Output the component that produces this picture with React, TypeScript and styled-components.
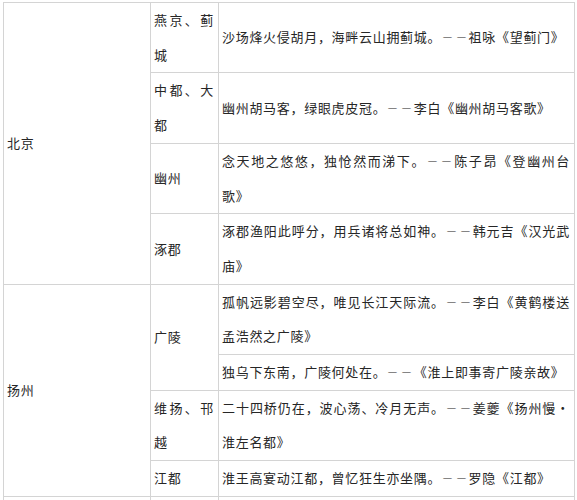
import React from "react";
import styled, { createGlobalStyle } from "styled-components";

const GlobalStyle = createGlobalStyle`
  html, body {
    margin: 0;
    padding: 0;
    background: #fff;
    overflow: hidden;
  }
  body {
    font-family: "Noto Sans CJK SC", "Noto Sans", sans-serif;
  }
`;

const Page = styled.div`
  width: 577px;
  height: 500px;
  overflow: hidden;
  padding: 2px 0 0 3px;
  box-sizing: border-box;
`;

const Table = styled.table`
  border-collapse: collapse;
  table-layout: fixed;
  width: 571px;
  color: #262626;
  font-size: 13px;
  letter-spacing: 0.7px;
  line-height: 34.7px;
  font-variant-east-asian: full-width;
  text-spacing-trim: space-all;
`;

type Kind = "city" | "area" | "poem";

const widths: Record<Kind, number> = {
  city: 147,
  area: 68,
  poem: 356,
};

const Col = styled.col<{ $kind: Kind }>`
  width: ${(p) => widths[p.$kind]}px;
`;

const Cell = styled.td<{ $kind: Kind }>`
  border: 1px solid #d4d4d4;
  padding: 0 4px 0 3px;
  vertical-align: middle;
  text-align: ${(p) => (p.$kind === "city" ? "left" : "justify")};
  line-break: strict;
`;

// the source font draws each dash of "——" as a short stroke with gaps
const Dash = styled.span`
  display: inline-block;
  width: 13px;
  margin-right: 0.7px;
  letter-spacing: 0;
  line-height: 1;
  text-align: center;
  transform: scaleX(0.76);
`;

type Area = { name: string; poems: string[] };
type City = { name: string; areas: Area[] };

const data: City[] = [
  {
    name: "北京",
    areas: [
      { name: "燕京、蓟城", poems: ["沙场烽火侵胡月，海畔云山拥蓟城。——祖咏《望蓟门》"] },
      { name: "中都、大都", poems: ["幽州胡马客，绿眼虎皮冠。——李白《幽州胡马客歌》"] },
      { name: "幽州", poems: ["念天地之悠悠，独怆然而涕下。——陈子昂《登幽州台歌》"] },
      { name: "涿郡", poems: ["涿郡渔阳此呼分，用兵诸将总如神。——韩元吉《汉光武庙》"] },
    ],
  },
  {
    name: "扬州",
    areas: [
      {
        name: "广陵",
        poems: [
          "孤帆远影碧空尽，唯见长江天际流。——李白《黄鹤楼送孟浩然之广陵》",
          "独乌下东南，广陵何处在。——《淮上即事寄广陵亲故》",
        ],
      },
      { name: "维扬、邗越", poems: ["二十四桥仍在，波心荡、冷月无声。——姜夔《扬州慢·淮左名都》"] },
      { name: "江都", poems: ["淮王高宴动江都，曾忆狂生亦坐隅。——罗隐《江都》"] },
    ],
  },
];

const renderPoem = (text: string) => {
  const [verse, source] = text.split("——");
  return (
    <>
      {verse}
      <Dash>—</Dash>
      <Dash>—</Dash>
      {source}
    </>
  );
};

const App: React.FC = () => {
  const rows: React.ReactNode[] = [];

  data.forEach((city) => {
    const cityRows = city.areas.reduce((n, a) => n + a.poems.length, 0);
    city.areas.forEach((area, ai) => {
      area.poems.forEach((poem, pi) => {
        rows.push(
          <tr key={`${city.name}-${area.name}-${pi}`}>
            {ai === 0 && pi === 0 && (
              <Cell $kind="city" rowSpan={cityRows}>
                {city.name}
              </Cell>
            )}
            {pi === 0 && (
              <Cell $kind="area" rowSpan={area.poems.length}>
                {area.name}
              </Cell>
            )}
            <Cell $kind="poem">{renderPoem(poem)}</Cell>
          </tr>
        );
      });
    });
  });

  return (
    <>
      <GlobalStyle />
      <Page lang="zh-CN">
        <Table>
          <colgroup>
            <Col $kind="city" />
            <Col $kind="area" />
            <Col $kind="poem" />
          </colgroup>
          <tbody>
            {rows}
            <tr>
              <Cell $kind="city">&nbsp;</Cell>
              <Cell $kind="area">&nbsp;</Cell>
              <Cell $kind="poem">&nbsp;</Cell>
            </tr>
          </tbody>
        </Table>
      </Page>
    </>
  );
};

export default App;
